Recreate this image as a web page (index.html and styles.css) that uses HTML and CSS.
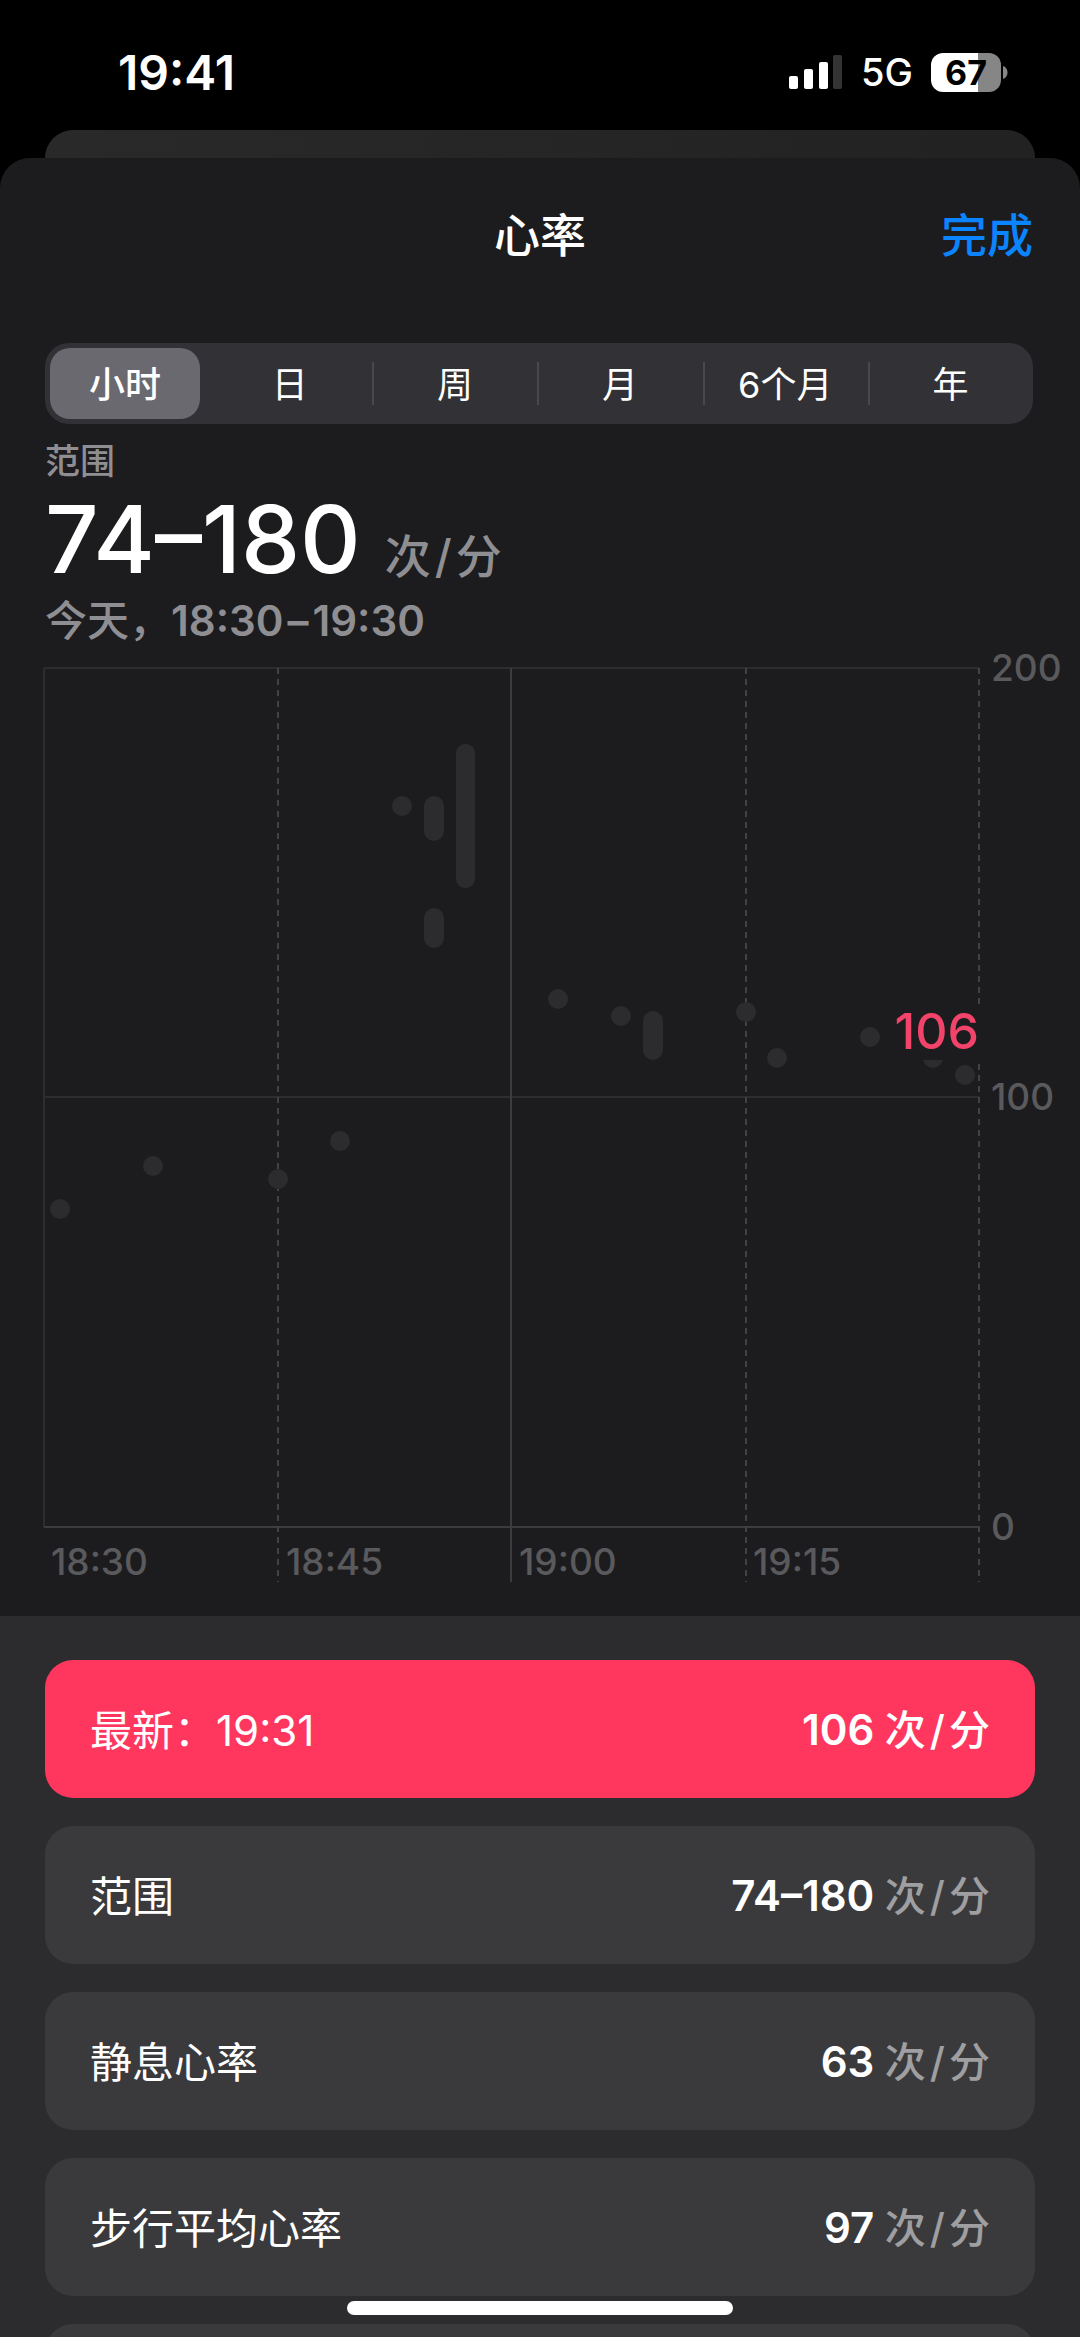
FILE: index.html
```html
<!DOCTYPE html>
<html lang="zh-CN">
<head>
<meta charset="utf-8">
<meta name="viewport" content="width=device-width">
<title>心率</title>
<link rel="stylesheet" href="styles.css">
</head>
<body>
<header class="status">
  <time class="status-time">19:41</time>
  <div class="status-icons">
    <svg class="signal" viewBox="0 0 54 36" aria-hidden="true">
      <rect x="0" y="22" width="9" height="13" rx="2"/>
      <rect x="15" y="15" width="9" height="20" rx="2"/>
      <rect x="30" y="8" width="9" height="27" rx="2"/>
      <rect class="signal-off" x="44" y="1" width="9" height="34" rx="2"/>
    </svg>
    <span class="network">5G</span>
    <span class="battery"><span class="battery-level">67</span>
      <svg class="battery-nub" viewBox="0 0 5 13" aria-hidden="true"><path d="M0 0C6 2 6 11 0 13Z"/></svg>
    </span>
  </div>
</header>
<div class="back-card"></div>
<main class="sheet">
  <div class="navbar">
    <h1 class="title">心率</h1>
    <button class="done" type="button">完成</button>
  </div>
  <nav class="segments">
    <button class="segment selected" type="button">小时</button>
    <button class="segment" type="button">日</button>
    <button class="segment ruled" type="button">周</button>
    <button class="segment ruled" type="button">月</button>
    <button class="segment ruled" type="button">6个月</button>
    <button class="segment ruled" type="button">年</button>
  </nav>
  <section class="summary">
    <p class="summary-label">范围</p>
    <p class="summary-value">74–180<span class="summary-unit">次<span class="slash">/</span>分</span></p>
    <p class="summary-date">今天，<span class="summary-time">18:30<span class="dash">–</span>19:30</span></p>
  </section>
  <svg class="chart" viewBox="0 0 1080 968" role="img" aria-label="心率">
    <g class="grid">
      <path d="M44 20H979M44 449H979"/>
      <path d="M44 20V879"/>
      <path class="grid-strong" d="M44 879H979M511 20V934"/>
      <path class="grid-dashed" d="M278 20V934M746 20V934M979 20V934"/>
    </g>
    <g class="marks">
      <circle cx="60" cy="561" r="10"/>
      <circle cx="153" cy="518" r="10"/>
      <circle cx="278" cy="531" r="10"/>
      <circle cx="340" cy="493" r="10"/>
      <circle cx="402" cy="158" r="10"/>
      <rect x="424" y="148" width="20" height="45" rx="10"/>
      <rect x="424" y="260" width="20" height="40" rx="10"/>
      <rect x="456" y="96" width="19" height="144" rx="9"/>
      <circle cx="558" cy="351" r="10"/>
      <circle cx="621" cy="368" r="10"/>
      <rect x="643" y="363" width="20" height="49" rx="10"/>
      <circle cx="746" cy="364" r="10"/>
      <circle cx="777" cy="410" r="10"/>
      <circle cx="870" cy="389" r="10"/>
      <circle cx="933" cy="410" r="10"/>
      <circle cx="965" cy="427" r="10"/>
    </g>
    <rect class="latest-back" x="886" y="357" width="98" height="55"/>
    <text class="latest" x="979" y="401">106</text>
    <g class="ticks">
      <text x="991" y="33">200</text>
      <text x="991" y="462">100</text>
      <text x="991" y="892">0</text>
      <text x="51" y="927">18:30</text>
      <text x="286" y="927">18:45</text>
      <text x="519" y="927">19:00</text>
      <text x="753" y="927">19:15</text>
    </g>
  </svg>
  <section class="metrics">
    <button class="metric active" type="button"><span>最新：19:31</span><span class="metric-value">106 <span class="unit">次<span class="slash">/</span>分</span></span></button>
    <button class="metric" type="button"><span>范围</span><span class="metric-value">74–180 <span class="unit">次<span class="slash">/</span>分</span></span></button>
    <button class="metric" type="button"><span>静息心率</span><span class="metric-value">63 <span class="unit">次<span class="slash">/</span>分</span></span></button>
    <button class="metric" type="button"><span>步行平均心率</span><span class="metric-value">97 <span class="unit">次<span class="slash">/</span>分</span></span></button>
    <div class="metric"></div>
  </section>
</main>
<div class="home-indicator"></div>
</body>
</html>
```
FILE: styles.css
```css
* {
  box-sizing: border-box;
}

body {
  margin: 0;
  height: 100vh;
  overflow: hidden;
  background: #000;
  color: #fff;
  font-family: Inter, "Noto Sans CJK SC", sans-serif;
}

button {
  border: 0;
  padding: 0;
  background: none;
  color: inherit;
  font: inherit;
}

h1,
p {
  margin: 0;
}

.status {
  display: flex;
  justify-content: space-between;
  align-items: center;
  height: 130px;
  padding: 14px 72px 0 118px;
}

.status-time {
  font-size: 48px;
  font-weight: 600;
}

.status-icons {
  display: flex;
  align-items: center;
}

.signal {
  width: 54px;
  height: 36px;
  margin-right: 18px;
  fill: #fff;
}

.signal-off {
  fill: #333;
}

.network {
  margin-right: 18px;
  font-size: 38px;
  font-weight: 500;
  line-height: 40px;
}

.battery {
  display: flex;
  align-items: center;
  gap: 2px;
}

.battery-level {
  width: 70px;
  height: 39px;
  border-radius: 12px;
  background: linear-gradient(90deg, #fff 67%, #868686 67%);
  color: #000;
  font-size: 34px;
  font-weight: 700;
  line-height: 39px;
  text-align: center;
}

.battery-nub {
  width: 5px;
  height: 13px;
  fill: #868686;
}

.back-card {
  height: 28px;
  margin: 0 45px;
  border-radius: 28px 28px 0 0;
  background: linear-gradient(90deg, #29292a, #222223);
}

.sheet {
  border-radius: 30px 30px 0 0;
  background: #1c1c1e;
}

.navbar {
  display: grid;
  grid-template-columns: 1fr auto 1fr;
  align-items: center;
  height: 185px;
  padding: 0 47px 32px;
  font-size: 46px;
  font-weight: 500;
  line-height: 60px;
}

.title {
  grid-column: 2;
  font: inherit;
}

.done {
  justify-self: end;
  color: #0a84ff;
}

.segments {
  display: grid;
  grid-template-columns: 162fr repeat(5, 165fr);
  height: 81px;
  margin: 0 47px 0 45px;
  border-radius: 24px;
  background: #323236;
  font-size: 36px;
}

.segment {
  padding-bottom: 4px;
}

.segment.selected {
  margin: 5px 7px 5px 5px;
  border-radius: 20px;
  background: #6a696f;
  font-weight: 500;
}

.ruled {
  background: linear-gradient(#49494d, #49494d) left center / 2px 43px no-repeat;
}

.summary {
  padding: 13px 45px 0;
  color: #8f8f93;
  font-weight: 500;
}

.summary-label {
  font-size: 35px;
  line-height: 48px;
}

.summary-value {
  color: #fff;
  font-size: 94px;
  line-height: 109px;
}

.summary-unit {
  margin-left: 24px;
  color: #8f8f93;
  font-size: 46px;
  line-height: 60px;
}

.summary-date {
  font-size: 42px;
  line-height: 54px;
}

.summary-time {
  font-weight: 600;
}

.slash,
.dash {
  margin: 0 4px;
}

.chart {
  display: block;
  width: 100%;
  overflow: visible;
}

.grid {
  fill: none;
  stroke: #2d2d2f;
  stroke-width: 2;
}

.grid-strong {
  stroke: #3c3c3e;
}

.grid-dashed {
  stroke: #424244;
  stroke-dasharray: 6 5;
}

.marks {
  fill: #2c2c2e;
}

.latest-back {
  fill: #1c1c1e;
}

.latest {
  fill: #f2436a;
  font-size: 50px;
  font-weight: 500;
  text-anchor: end;
}

.ticks {
  fill: #5a5a5d;
  font-size: 37px;
  font-weight: 500;
}

.metrics {
  display: flex;
  flex-direction: column;
  gap: 28px;
  padding: 44px 45px;
  background: #2c2c2e;
}

.metric {
  display: flex;
  flex: none;
  justify-content: space-between;
  align-items: center;
  height: 138px;
  padding: 0 45px 4px;
  border-radius: 28px;
  background: #3a3a3c;
  font-size: 42px;
}

.metric-value {
  font-weight: 600;
}

.unit {
  color: #9f9fa2;
  font-size: 41px;
  font-weight: 500;
}

.active {
  background: #ff375f;
}

.active .unit {
  color: #fff;
}

.home-indicator {
  position: fixed;
  bottom: 22px;
  left: 50%;
  width: 386px;
  height: 14px;
  margin-left: -193px;
  border-radius: 7px;
  background: #fff;
}
```
